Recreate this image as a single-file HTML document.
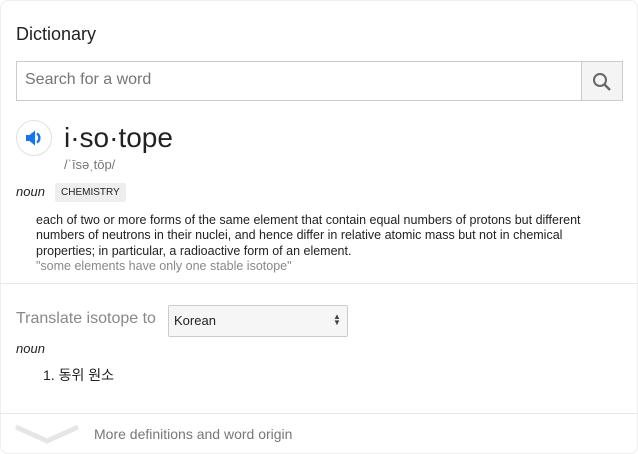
<!DOCTYPE html>
<html><head><style>
body{margin:0;width:638px;height:454px;background:#fff;font-family:"Liberation Sans",Arial,sans-serif;position:relative;overflow:hidden}
.card{position:absolute;left:0;top:0;width:636px;height:452px;border:1px solid #eee;border-radius:8px}
.a{position:absolute;white-space:nowrap}
</style></head><body>
<div class="card"></div>
<div class="a" style="left:16px;top:24px;font-size:18px;color:#222">Dictionary</div>
<div class="a" style="left:16px;top:61px;width:564px;height:38px;border:1px solid #ccc;border-right:none"></div>
<div class="a" style="left:25px;top:71px;font-size:16px;color:#757575">Search for a word</div>
<div class="a" style="left:581px;top:61px;width:40px;height:38px;border:1px solid #ccc;background:#f4f4f4">
<svg width="40" height="38" viewBox="0 0 40 38"><circle cx="18" cy="18" r="6" fill="none" stroke="#666" stroke-width="2"/><path d="M22.5 22.5L28 28" stroke="#666" stroke-width="2.4"/></svg></div>
<div class="a" style="left:16px;top:120px;width:34px;height:34px;border:1px solid #e0e0e0;border-radius:50%;background:#fff">
<svg width="34" height="34" viewBox="0 0 34 34"><path d="M9 14h3.5l5.5-4.5v15l-5.5-4.5h-3.5z" fill="#1a73e8"/><path d="M20 12.5a5.5 5.5 0 0 1 0 9" stroke="#1a73e8" stroke-width="2.4" fill="none"/></svg></div>
<div class="a" style="left:64px;top:122px;font-size:28px;color:#222">i·so·tope</div>
<div class="a" style="left:64px;top:157px;font-size:13px;color:#777">/ˈīsəˌtōp/</div>
<div class="a" style="left:16px;top:184px;font-size:13px;font-style:italic;color:#222">noun</div>
<div class="a" style="left:55px;top:183px;height:19px;line-height:19px;padding:0 6px;background:#eee;border-radius:2px;font-size:10px;color:#222">CHEMISTRY</div>
<div class="a" style="left:36px;top:213px;font-size:12.5px;line-height:15.3px;color:#222;white-space:normal;width:572px">each of two or more forms of the same element that contain equal numbers of protons but different numbers of neutrons in their nuclei, and hence differ in relative atomic mass but not in chemical properties; in particular, a radioactive form of an element.<br><span style="color:#888">"some elements have only one stable isotope"</span></div>
<div class="a" style="left:0;top:283px;width:638px;height:1px;background:#e8e8e8"></div>
<div class="a" style="left:16px;top:310px;font-size:16px;color:#888">Translate isotope to</div>
<div class="a" style="left:168px;top:305px;width:178px;height:30px;border:1px solid #ccc;border-radius:2px;background:#f6f6f6"></div>
<div class="a" style="left:174px;top:313px;font-size:13px;color:#222">Korean</div>
<div class="a" style="left:333px;top:314px;font-size:8px;line-height:6px;color:#444">▲<br>▼</div>
<div class="a" style="left:16px;top:341px;font-size:13px;font-style:italic;color:#222">noun</div>
<div class="a" style="left:43px;top:365px;font-size:14px;color:#222;font-family:'Liberation Sans','Noto Sans CJK KR',sans-serif">1. 동위 원소</div>
<div class="a" style="left:0;top:413px;width:638px;height:1px;background:#e8e8e8"></div>
<svg class="a" style="left:14px;top:422px" width="66" height="24" viewBox="0 0 66 24"><path d="M2 5L33 19L64 5" stroke="#e6e6e6" stroke-width="5" fill="none"/></svg>
<div class="a" style="left:94px;top:426px;font-size:14px;color:#777">More definitions and word origin</div>
</body></html>
